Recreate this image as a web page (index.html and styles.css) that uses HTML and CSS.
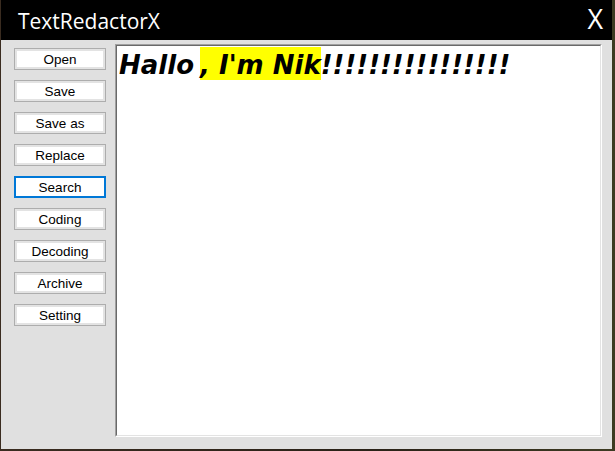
FILE: index.html
```html
<!DOCTYPE html>
<html>
<head>
<meta charset="utf-8">
<title>TextRedactorX</title>
<link rel="stylesheet" href="styles.css">
</head>
<body>
<div class="window">
  <div class="titlebar">
    <span class="title">TextRedactorX</span>
    <span class="close">X</span>
  </div>
  <div class="client">
    <div class="sidebar">
      <button class="btn">Open</button>
      <button class="btn">Save</button>
      <button class="btn">Save as</button>
      <button class="btn">Replace</button>
      <button class="btn focused">Search</button>
      <button class="btn">Coding</button>
      <button class="btn">Decoding</button>
      <button class="btn">Archive</button>
      <button class="btn">Setting</button>
    </div>
    <div class="editor-outer">
      <div class="editor-inner">
        <div class="editor-text">Hallo <span class="hl">, I'm Nik</span>!!!!!!!!!!!!!!!!</div>
      </div>
    </div>
  </div>
</div>
</body>
</html>
```

FILE: styles.css
```css
html, body {
  margin: 0;
  padding: 0;
}
body {
  width: 615px;
  height: 451px;
  overflow: hidden;
  background: linear-gradient(90deg, #3a2c20 0%, #2a2218 60%, #3d3b22 100%);
}
.window {
  margin-left: 1px;
  width: 611px;
  height: 449px;
  display: flex;
  flex-direction: column;
  background: #e0e0e0;
}
.titlebar {
  height: 40px;
  background: #000;
  display: flex;
  align-items: center;
  justify-content: space-between;
  padding: 0 9px 0 17px;
  color: #fff;
  font-family: "Open Sans", "Liberation Sans", sans-serif;
}
.title {
  font-size: 21px;
  margin-top: 1px;
}
.close {
  font-size: 27px;
  margin-top: -3px;
}
.client {
  flex: 1;
  display: flex;
  padding: 4px 10px 12px 13px;
}
.sidebar {
  width: 92px;
  display: flex;
  flex-direction: column;
  gap: 10px;
  padding-top: 4px;
  margin-right: 9px;
}
.btn {
  width: 92px;
  height: 22px;
  margin: 0;
  padding: 1px 0 0;
  background: #fff;
  border: 1px solid #adadad;
  box-shadow: inset 0 0 0 2px #e3e3e3;
  font-family: "Liberation Sans", Arial, sans-serif;
  font-size: 13.5px;
  color: #000;
  line-height: 18px;
}
.btn.focused {
  border: 2px solid #0078d7;
  box-shadow: none;
}
.editor-outer {
  flex: 1;
  border-top: 1px solid #a0a0a0;
  border-left: 1px solid #a0a0a0;
  border-right: 1px solid #ffffff;
  border-bottom: 1px solid #ffffff;
  display: flex;
}
.editor-inner {
  flex: 1;
  background: #fff;
  border-top: 1px solid #696969;
  border-left: 1px solid #696969;
  border-right: 1px solid #e3e3e3;
  border-bottom: 1px solid #e3e3e3;
  padding: 1px 2px;
}
.editor-text {
  font-family: "DejaVu Sans", Verdana, sans-serif;
  font-weight: bold;
  font-style: italic;
  font-size: 26px;
  line-height: 36px;
  color: #000;
  white-space: nowrap;
  word-spacing: -3px;
}
.hl {
  background: #ffff00;
  padding: 3px 0 0;
  word-spacing: 0;
}
```
